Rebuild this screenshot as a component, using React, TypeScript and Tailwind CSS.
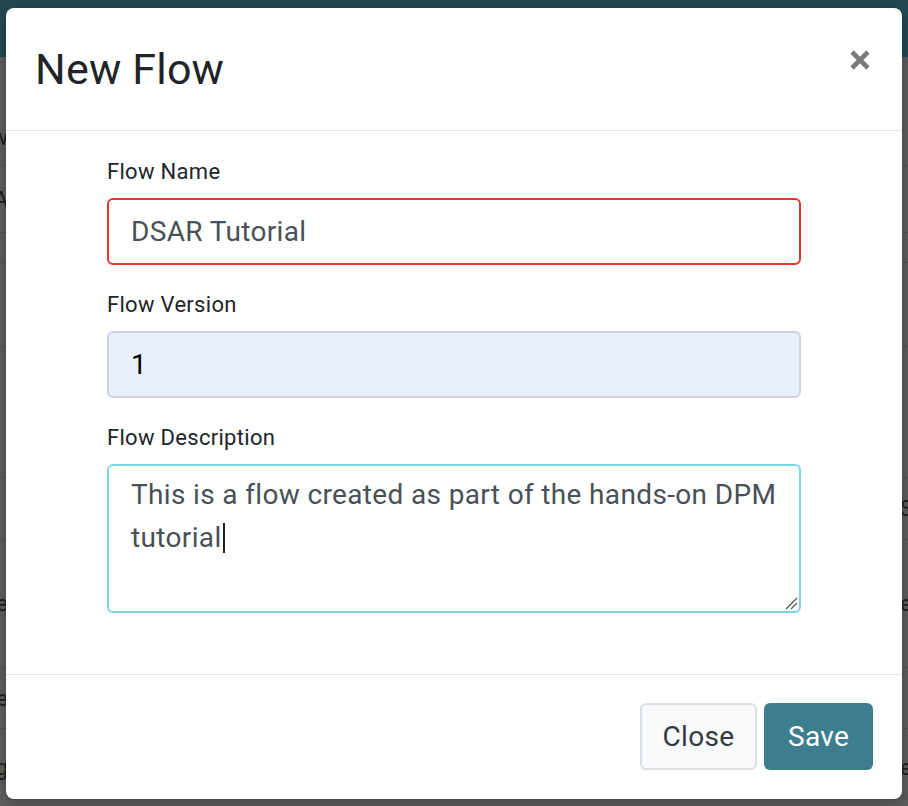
import React from "react"

type BgRow = {
  h: string
  left?: string
  right?: string
  line: boolean
}

// dimmed page behind the modal
const rows: BgRow[] = [
  { h: "h-[53px]", line: false },
  { h: "h-[56px]", left: "ow", line: true },
  { h: "h-[67px]", left: "A", line: true },
  { h: "h-[30px]", line: true },
  { h: "h-[84px]", line: true },
  { h: "h-[131px]", line: true },
  { h: "h-[62px]", right: "St", line: true },
  { h: "h-[128px]", left: "ce", right: "er", line: true },
  { h: "h-[61px]", left: "ve", line: true },
  { h: "h-[77px]", left: "ing", right: "e", line: false },
]

function CloseIcon() {
  return (
    <svg width="22" height="22" viewBox="0 0 22 22" fill="none">
      <path d="M3 3L19 19M19 3L3 19" stroke="#7a7a7a" strokeWidth="4.6" />
    </svg>
  )
}

function ResizeGrip() {
  return (
    <svg width="14" height="14" viewBox="0 0 14 14" fill="none">
      <path d="M2 13L13 2M7 13L13 7" stroke="#555" strokeWidth="1.3" />
    </svg>
  )
}

export default function App() {
  return (
    <div className="relative w-[908px] h-[806px] overflow-hidden bg-[#5b5b5b] font-['Roboto',sans-serif]">
      {/* page behind */}
      <div className="h-[57px] bg-[#22484f]" />
      <div className="flex flex-col">
        {rows.map((row, i) => (
          <div
            key={i}
            className={`${row.h} flex items-center ${row.line ? "border-b border-[#4f4f4f]" : ""}`}
          >
            <div className="w-[8px] overflow-hidden flex justify-end whitespace-nowrap text-[22px] text-[#1c1c1c]">
              {row.left}
            </div>
            <div className="flex-1" />
            <div className="w-[8px] overflow-hidden whitespace-nowrap text-[22px] text-[#1c1c1c]">
              {row.right}
            </div>
          </div>
        ))}
      </div>

      {/* modal */}
      <div className="absolute left-[6px] top-[8px] w-[896px] bg-white rounded-[8px] shadow-[0_2px_8px_rgba(0,0,0,0.25)] flex flex-col">
        <div className="h-[123px] border-b border-[#e6e7ec] flex items-center justify-between pl-[29px] pr-[31px]">
          <h2 className="text-[43px] leading-none font-normal text-[#212529] tracking-[0.2px]">New Flow</h2>
          <button className="mb-[18px]">
            <CloseIcon />
          </button>
        </div>

        <div className="px-[101px] pt-[24px] pb-[61px]">
          <div className="mb-[23px]">
            <label className="block text-[22px] leading-[33px] tracking-[0.3px] text-[#212529] mb-[10px]">Flow Name</label>
            <div className="h-[67px] border-2 border-[#e2382d] rounded-[6px] flex items-center px-[22px] text-[28px] tracking-[0.35px] text-[#495057]">
              DSAR Tutorial
            </div>
          </div>

          <div className="mb-[23px]">
            <label className="block text-[22px] leading-[33px] tracking-[0.3px] text-[#212529] mb-[10px]">Flow Version</label>
            <div className="h-[67px] border-2 border-[#ced4da] bg-[#e8f0fe] rounded-[6px] flex items-center px-[22px] text-[28px] text-black">
              1
            </div>
          </div>

          <div>
            <label className="block text-[22px] leading-[33px] tracking-[0.3px] text-[#212529] mb-[10px]">Flow Description</label>
            <div className="relative h-[149px] border-2 border-[#80d3e4] rounded-[6px] px-[22px] pt-[7px] text-[28px] leading-[43px] tracking-[0.35px] text-[#495057] whitespace-nowrap">
              <div>This is a flow created as part of the hands-on DPM</div>
              <div className="flex items-center">
                tutorial
                <span className="inline-block w-[2px] h-[30px] bg-[#222] ml-[1px]" />
              </div>
              <div className="absolute right-[1px] bottom-[1px]">
                <ResizeGrip />
              </div>
            </div>
          </div>
        </div>

        <div className="border-t border-[#e6e7ec] flex justify-end gap-[7px] pt-[28px] pb-[29px] pr-[29px]">
          <button className="h-[67px] w-[117px] rounded-[6px] border-2 border-[#dcdfe2] bg-[#f8f9fa] text-[28px] tracking-[0.3px] text-[#343a40]">
            Close
          </button>
          <button className="h-[67px] w-[109px] rounded-[6px] bg-[#3d7e8e] text-[28px] tracking-[0.3px] text-white">
            Save
          </button>
        </div>
      </div>
    </div>
  )
}
